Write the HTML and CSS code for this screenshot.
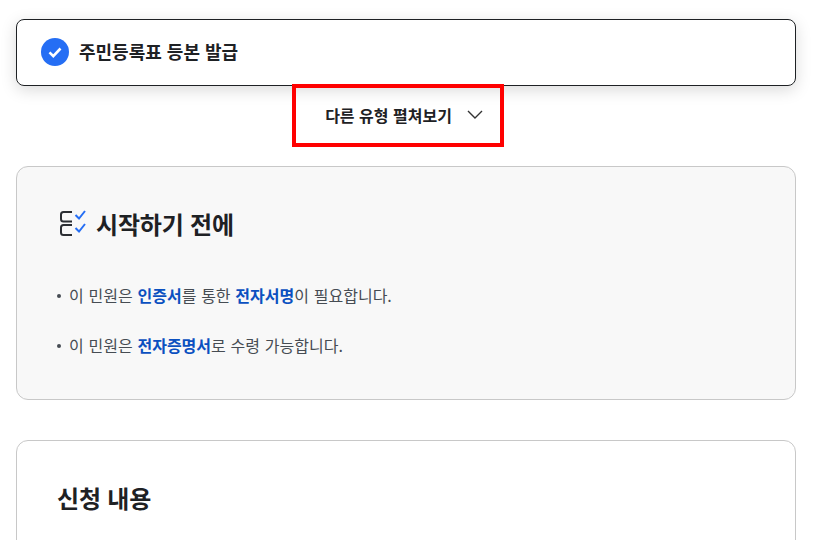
FILE: index.html
```html
<!DOCTYPE html>
<html lang="ko">
<head>
  <meta charset="UTF-8">
  <title>주민등록표 등본 발급</title>
  <link rel="stylesheet" href="styles.css">
</head>
<body>
  <div class="page">
    <div class="selected-type">
      <svg class="check-icon" width="28" height="28" viewBox="0 0 28 28">
        <circle cx="14" cy="14" r="14" fill="#256ef4"/>
        <path d="M8.5 14.3l3.800 3.800 7.200-7.600" fill="none" stroke="#fff" stroke-width="2.600"/>
      </svg>
      <span class="selected-label">주민등록표 등본 발급</span>
    </div>

    <div class="toggle-wrap">
      <button class="toggle-btn">
        <span>다른 유형 펼쳐보기</span>
        <svg width="16" height="9" viewBox="0 0 16 9">
          <path d="M1 1l7 7 7-7" fill="none" stroke="#333" stroke-width="1.400"/>
        </svg>
      </button>
    </div>

    <section class="card card-gray">
      <h2 class="card-title">
        <svg width="30" height="28" viewBox="0 0 30 28" fill="none">
          <path d="M15 2H6.500A2.500 2.500 0 0 0 4 4.500v4.500a2.500 2.500 0 0 0 2.500 2.500H15" stroke="#2b2e33" stroke-width="2"/>
          <path d="M15 15H6.500A2.500 2.500 0 0 0 4 17.500v5a2.500 2.500 0 0 0 2.500 2.500H15" stroke="#2b2e33" stroke-width="2"/>
          <path d="M18.500 5l3.500 3.500 6-7.500M18.500 18l3.500 3.500 6-7.500" stroke="#256ef4" stroke-width="2"/>
        </svg>
        <span>시작하기 전에</span>
      </h2>
      <ul class="notice-list">
        <li>이 민원은 <b>인증서</b>를 통한 <b>전자서명</b>이 필요합니다.</li>
        <li>이 민원은 <b>전자증명서</b>로 수령 가능합니다.</li>
      </ul>
    </section>

    <section class="card">
      <h2 class="card-title">신청 내용</h2>
    </section>
  </div>
</body>
</html>
```

FILE: styles.css
```css
html, body {
  height: 540px;
  overflow: hidden;
}

body {
  margin: 0;
  background-color: #fff;
  color: #1e2124;
  font-family: "Noto Sans CJK KR", "Liberation Sans", sans-serif;
}

.page {
  padding: 19px 20px 0 16px;
}

.selected-type {
  display: flex;
  align-items: center;
  gap: 10px;
  height: 67px;
  padding: 0 24px 1px;
  box-sizing: border-box;
  border: 1px solid #1e2124;
  border-radius: 8px;
  font-size: 18px;
  font-weight: 700;
  box-shadow: 0 4px 16px rgba(0, 0, 0, 0.15);
}

.selected-label {
  margin-top: -3px;
}

.toggle-wrap {
  display: flex;
  justify-content: center;
  margin: -2px 17px 0 0;
}

.toggle-btn {
  display: flex;
  align-items: center;
  justify-content: center;
  gap: 15px;
  width: 212px;
  height: 63px;
  padding: 0 0 2px 13px;
  box-sizing: border-box;
  border: 4px solid #f00;
  background: transparent;
  color: #1e2124;
  font-family: inherit;
  font-size: 16px;
  font-weight: 700;
}

.card {
  margin-top: 40px;
  padding: 40px;
  border: 1px solid #c8c8c8;
  border-radius: 12px;
}

.card-gray {
  margin-top: 19px;
  height: 234px;
  box-sizing: border-box;
  background-color: #f8f8f8;
}

.card-title {
  display: flex;
  align-items: center;
  gap: 9px;
  margin: -1px 0 0;
  font-size: 24px;
  font-weight: 700;
  letter-spacing: -0.2px;
}

.notice-list {
  list-style: none;
  margin: 42px 0 0;
  padding: 0;
  color: #464c53;
  font-size: 16px;
  word-spacing: 0.3px;
}

.notice-list li {
  position: relative;
  padding-left: 12px;
  margin-bottom: 26px;
}

.notice-list li::before {
  content: "";
  position: absolute;
  left: 0;
  top: 11px;
  width: 4px;
  height: 4px;
  border-radius: 50%;
  background-color: #464c53;
}

.notice-list b {
  color: #0b50c0;
}
```
